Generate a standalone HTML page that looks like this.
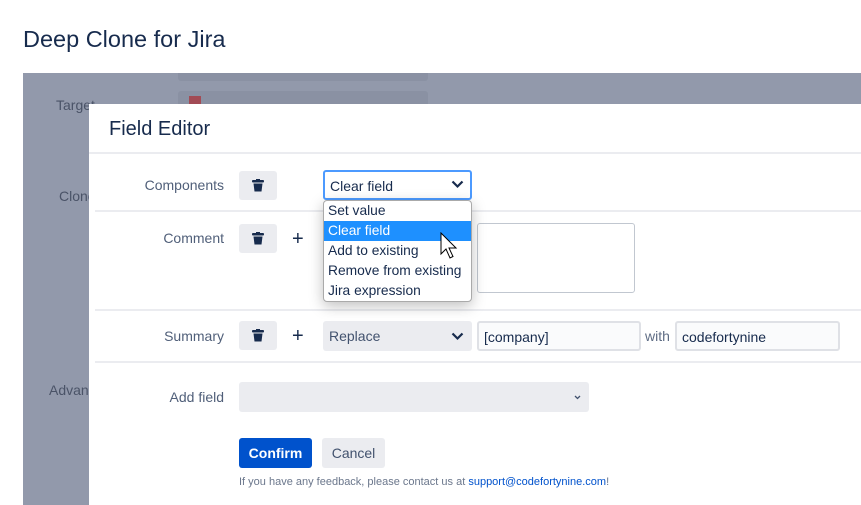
<!DOCTYPE html>
<html><head><style>
*{box-sizing:border-box;margin:0;padding:0}
body{width:861px;height:505px;overflow:hidden;background:#fff;font-family:"Liberation Sans",sans-serif;position:relative;color:#172b4d}
.a{position:absolute}
.lbl{font-size:14px;color:#505f79;text-align:right;width:140px}
.trash{width:38px;height:29px;background:#ebecf0;border-radius:3px}
.trash svg{position:absolute;left:13px;top:8px}
.plus{font-size:20px;color:#172b4d}
.inp{height:29px;border:2px solid #dfe1e6;background:#fafbfc;border-radius:3px;font-size:14px;padding:5px 5px;color:#172b4d}
.hr{height:2px;background:#ebecf0;left:95px;right:0}
</style></head><body>
<div class="a" style="left:23px;top:26px;font-size:23.5px;color:#172b4d">Deep Clone for Jira</div>
<div class="a" style="left:23px;top:73px;width:838px;height:432px;background:#9299ab"></div>
<div class="a" style="left:178px;top:73px;width:250px;height:8px;background:#8a91a3;border-radius:0 0 3px 3px"></div>
<div class="a" style="left:178px;top:91px;width:250px;height:13px;background:#8a91a3;border-radius:3px 3px 0 0"></div>
<div class="a" style="left:189px;top:96px;width:12px;height:8px;background:#a24b55"></div>
<div class="a" style="left:56px;top:97px;font-size:14px;color:#4a5367">Target</div>
<div class="a" style="left:59px;top:188px;font-size:14px;color:#4a5367">Clone</div>
<div class="a" style="left:49px;top:382px;font-size:14px;color:#4a5367">Advan</div>
<div class="a" style="left:89px;top:104px;width:772px;height:401px;background:#fff"></div>
<div class="a" style="left:109px;top:118px;font-size:20px;color:#172b4d">Field Editor</div>
<div class="a" style="left:89px;top:152px;width:772px;height:2px;background:#ebecf0"></div>
<div class="a hr" style="top:210px"></div>
<div class="a hr" style="top:309px"></div>
<div class="a hr" style="top:361px"></div>

<div class="a lbl" style="left:84px;top:177px">Components</div>
<div class="a trash" style="left:239px;top:171px"><svg width="12" height="13" viewBox="0 0 12 13"><rect x="0" y="1" width="12" height="2.5" rx="1" fill="#172b4d"/><rect x="4" y="0" width="4" height="2" fill="#172b4d"/><path d="M1.5 4.5h9l-1 8h-7z" fill="#172b4d"/></svg></div>
<div class="a inp" style="left:323px;top:170px;width:149px;height:30px;border-color:#4c9aff;background:#fff;padding:6px 5px">Clear field</div>
<svg class="a" style="left:451px;top:180px" width="13" height="9"><path d="M1.5 1.5l5 5 5-5" stroke="#172b4d" stroke-width="2.2" fill="none"/></svg>

<div class="a lbl" style="left:84px;top:230px">Comment</div>
<div class="a trash" style="left:239px;top:224px"><svg width="12" height="13" viewBox="0 0 12 13"><rect x="0" y="1" width="12" height="2.5" rx="1" fill="#172b4d"/><rect x="4" y="0" width="4" height="2" fill="#172b4d"/><path d="M1.5 4.5h9l-1 8h-7z" fill="#172b4d"/></svg></div>
<div class="a plus" style="left:292px;top:228px">+</div>
<div class="a" style="left:477px;top:223px;width:158px;height:70px;border:1px solid #c1c7d0;border-radius:3px;background:#fff"></div>

<div class="a lbl" style="left:84px;top:328px">Summary</div>
<div class="a trash" style="left:239px;top:321px"><svg width="12" height="13" viewBox="0 0 12 13"><rect x="0" y="1" width="12" height="2.5" rx="1" fill="#172b4d"/><rect x="4" y="0" width="4" height="2" fill="#172b4d"/><path d="M1.5 4.5h9l-1 8h-7z" fill="#172b4d"/></svg></div>
<div class="a plus" style="left:292px;top:325px">+</div>
<div class="a" style="left:323px;top:321px;width:149px;height:30px;background:#ebecf0;border-radius:3px;font-size:14px;padding:7px 6px;color:#42526e">Replace</div>
<svg class="a" style="left:451px;top:332px" width="13" height="9"><path d="M1.5 1.5l5 5 5-5" stroke="#172b4d" stroke-width="2.2" fill="none"/></svg>
<div class="a inp" style="left:477px;top:321px;width:164px;height:30px;padding:6px 5px">[company]</div>
<div class="a" style="left:645px;top:328px;font-size:14px;color:#5e6c84">with</div>
<div class="a inp" style="left:675px;top:321px;width:165px;height:30px;padding:6px 5px">codefortynine</div>

<div class="a lbl" style="left:84px;top:389px">Add field</div>
<div class="a" style="left:239px;top:382px;width:350px;height:30px;background:#ebecf0;border-radius:3px"></div>
<svg class="a" style="left:574px;top:395px" width="7" height="5"><path d="M1 1l2.5 2.5L6 1" stroke="#42526e" stroke-width="1.3" fill="none"/></svg>

<div class="a" style="left:239px;top:438px;width:73px;height:30px;background:#0052cc;border-radius:3px;color:#fff;font-weight:bold;font-size:14px;text-align:center;line-height:30px">Confirm</div>
<div class="a" style="left:322px;top:438px;width:63px;height:30px;background:#ebecf0;border-radius:3px;color:#42526e;font-size:14px;text-align:center;line-height:30px">Cancel</div>
<div class="a" style="left:239px;top:476px;font-size:11px;color:#6b778c">If you have any feedback, please contact us at <span style="color:#0052cc">support@codefortynine.com</span>!</div>

<div class="a" style="left:323px;top:200px;width:149px;height:102px;background:#fff;border:1px solid #aaa;border-radius:4px;box-shadow:0 4px 14px rgba(0,0,0,.25);font-size:13.8px;color:#172b4d;overflow:hidden;white-space:nowrap">
<div style="height:20px;padding:2px 4px">Set value</div>
<div style="height:20px;padding:2px 4px;background:#1e90ff;color:#fff">Clear field</div>
<div style="height:20px;padding:2px 4px">Add to existing</div>
<div style="height:20px;padding:2px 4px">Remove from existing</div>
<div style="height:20px;padding:2px 4px">Jira expression</div>
</div>
<svg class="a" style="left:440px;top:232px" width="20" height="28" viewBox="0 0 20 28"><path d="M1 1v21l5-5 4 9 3-1.5-4-8.5h7z" fill="#fff" stroke="#000" stroke-width="1"/></svg>
</body></html>
